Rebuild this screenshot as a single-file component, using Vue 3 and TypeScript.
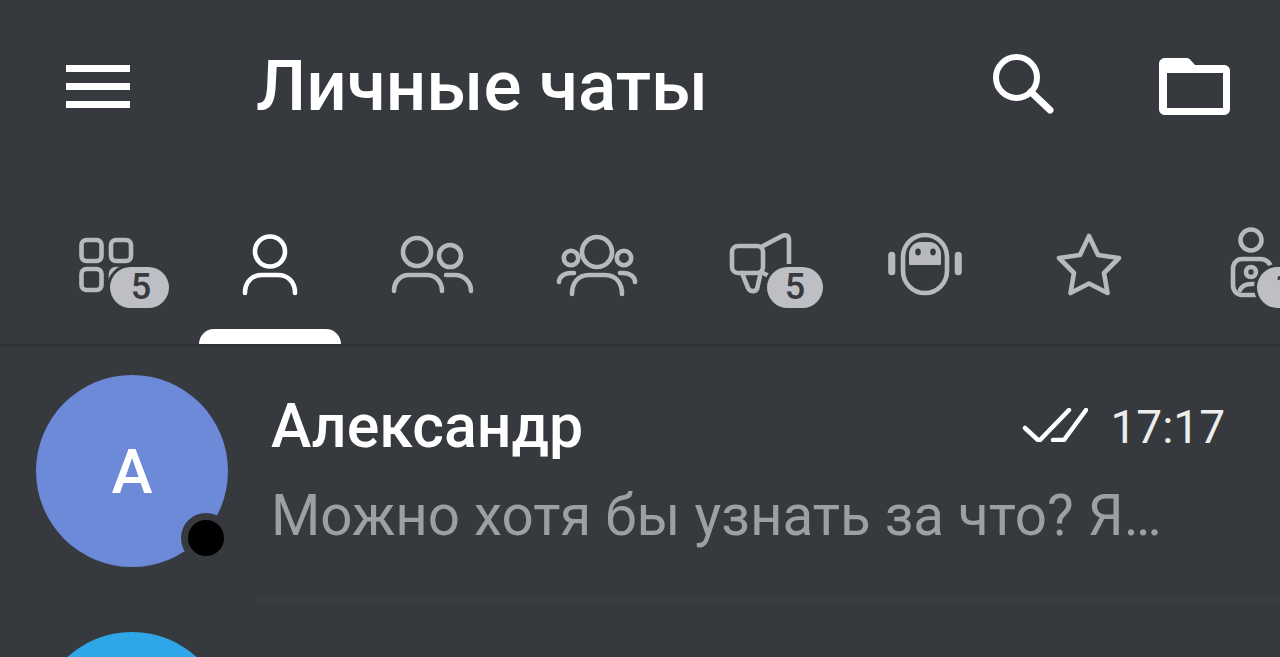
<template>
  <div class="screen">
    <!-- Top bar -->
    <header class="top-bar">
      <div class="menu-icon"><span></span><span></span><span></span></div>
      <h1 class="title">Личные чаты</h1>
      <svg class="search-icon" viewBox="0 0 64 64" fill="none" stroke="#fff">
        <circle cx="24.5" cy="24.5" r="20.5" stroke-width="6" />
        <path d="M39 39l19 18" stroke-width="7" stroke-linecap="round" />
      </svg>
      <svg class="folder-icon" viewBox="0 0 71 57">
        <path
          fill="#fff"
          fill-rule="evenodd"
          d="M6 0h21c2 0 3 .6 4.500 2L36 7h29c3.500 0 6 2.500 6 6v38c0 3.500-2.500 6-6 6H6c-3.500 0-6-2.500-6-6V6c0-3.500 2.500-6 6-6zM8 15v35h56V15z"
        />
      </svg>
    </header>

    <!-- Folder tabs -->
    <nav class="tabs">
      <div v-for="tab in tabs" :key="tab.id" class="tab" :class="{ active: tab.id === 'personal' }">
        <div class="tab-icon">
          <svg viewBox="0 0 80 80" fill="none" stroke="currentColor" stroke-width="4.600" stroke-linecap="round" stroke-linejoin="round">
            <g v-if="tab.id === 'all'">
              <rect x="15.500" y="14" width="20" height="21" rx="5" />
              <rect x="45" y="14" width="20" height="21" rx="5" />
              <rect x="15.500" y="43" width="20" height="21" rx="5" />
              <rect x="45" y="43" width="20" height="21" rx="5" />
            </g>
            <g v-else-if="tab.id === 'personal'">
              <circle cx="40" cy="25.500" r="15" />
              <path d="M15 67c0-11 7-18 17-18h16c10 0 17 7 17 18" />
            </g>
            <g v-else-if="tab.id === 'groups'">
              <circle cx="24" cy="26" r="14" />
              <circle cx="57" cy="30" r="11" />
              <path d="M1 65c0-9 6-16 15-16h18c9 0 15 7 15 16" />
              <path d="M53 49h9c9 0 16 7 16 16" />
            </g>
            <g v-else-if="tab.id === 'communities'">
              <circle cx="40" cy="26" r="15" />
              <circle cx="14" cy="32" r="7.200" />
              <circle cx="67" cy="32" r="7.200" />
              <path d="M15 68c0-11 6-19 17-19h16c11 0 17 8 17 19" />
              <path d="M2 56c0-5 5-9 12-9h3" />
              <path d="M78 56c0-5-5-9-12-9h-3" />
            </g>
            <g v-else-if="tab.id === 'channels'">
              <rect x="11" y="20" width="31" height="27" rx="6" />
              <path d="M42 20l19-10c4-2 7 0 7 4v32" />
              <path d="M42 47l8 4" />
              <path d="M21 47l6 15c2 4 7 4 9 1l3-13" />
            </g>
            <g v-else-if="tab.id === 'bots'">
              <rect x="18" y="9" width="44" height="58" rx="22" />
              <path d="M25 38V28c0-6 5-11 10-11h10c5 0 10 5 10 11v10z" fill="currentColor" stroke-width="2" />
              <rect x="5.500" y="28" width="2.500" height="19" rx="1.200" />
              <rect x="72" y="28" width="2.500" height="19" rx="1.200" />
              <ellipse cx="33" cy="26" rx="2.800" ry="3.400" fill="#36393e" stroke="none" />
              <ellipse cx="48" cy="26" rx="2.800" ry="3.400" fill="#36393e" stroke="none" />
            </g>
            <g v-else-if="tab.id === 'favorites'">
              <path d="M40 10l9 19 21 3-15 15 3.500 20L40 57.500 21.500 67 25 47 10 32l21-3z" />
            </g>
            <g v-else>
              <circle cx="39" cy="14" r="10.500" />
              <path d="M30 33h18c6 0 11 4 11 10v16c0 6-5 10-11 10H30c-5 0-9-4-9-10V43c0-6 4-10 9-10z" />
              <circle cx="39" cy="46" r="5" />
              <path d="M28 64c2-4 6-6 11-6h6" />
            </g>
          </svg>
          <span v-if="tab.badge" class="badge" :class="'badge-' + tab.id">{{ tab.badge }}</span>
        </div>
      </div>
    </nav>

    <!-- Chat list -->
    <section class="chat-list">
      <article class="chat">
        <div class="avatar">
          А
          <span class="status"></span>
        </div>
        <div class="chat-body">
          <div class="chat-head">
            <span class="chat-name">Александр</span>
            <svg class="read-icon" viewBox="0 0 66 34" fill="none" stroke="#fff" stroke-width="4.500" stroke-linecap="round" stroke-linejoin="round">
              <path d="M3 20l14 13L47 2" />
              <path d="M31 32h11L64 2" />
            </svg>
            <span class="chat-time">17:17</span>
          </div>
          <p class="chat-text">Можно хотя бы узнать за что? Я…</p>
        </div>
      </article>
      <div class="chat next">
        <div class="avatar blue"></div>
      </div>
    </section>
  </div>
</template>

<script setup lang="ts">
interface Tab {
  id: string
  badge?: number
}

const tabs: Tab[] = [
  { id: 'all', badge: 5 },
  { id: 'personal' },
  { id: 'groups' },
  { id: 'communities' },
  { id: 'channels', badge: 5 },
  { id: 'bots' },
  { id: 'favorites' },
  { id: 'agents', badge: 1 }
]
</script>

<style>
html,
body {
  margin: 0;
  background: #36393e;
}
</style>

<style scoped>
.screen {
  width: 1280px;
  height: 657px;
  overflow: hidden;
  background: #36393e;
  font-family: Roboto, "Noto Sans", sans-serif;
  color: #fff;
}

/* Top bar */
.top-bar {
  height: 172px;
  display: flex;
  align-items: center;
  padding: 0 50px 0 66px;
  box-sizing: border-box;
}

.menu-icon {
  width: 64px;
  margin-top: 1px;
  display: flex;
  flex-direction: column;
  gap: 10.500px;
}

.menu-icon span {
  height: 7.500px;
  background: #fff;
}

.title {
  flex: 1;
  margin: -2px 0 0 126px;
  font-size: 71px;
  font-weight: 500;
  line-height: 1;
}

.search-icon {
  width: 64px;
  height: 64px;
  margin-right: 103px;
  margin-top: -3px;
}

.folder-icon {
  width: 71px;
  height: 57px;
}

/* Tabs */
.tabs {
  height: 172px;
  display: flex;
  padding-left: 24px;
  box-sizing: border-box;
  overflow: hidden;
}

.tab {
  position: relative;
  flex: 0 0 163.800px;
  display: flex;
  justify-content: center;
  padding-top: 54px;
  box-sizing: border-box;
  color: #b7b9be;
}

.tab.active {
  color: #fff;
}

.tab.active::after {
  content: "";
  position: absolute;
  left: 11px;
  right: 11px;
  bottom: 0;
  height: 15px;
  background: #fff;
  border-radius: 16px 16px 0 0;
}

.tab-icon {
  position: relative;
  width: 80px;
  height: 80px;
}

.tab-icon svg {
  display: block;
  width: 80px;
  height: 80px;
  overflow: visible;
}

.badge {
  position: absolute;
  left: 44px;
  top: 41px;
  width: 59px;
  height: 41px;
  border-radius: 21px;
  background: #bdbfc4;
  box-shadow: 0 0 0 3px #36393e;
  color: #36393e;
  font-size: 36px;
  font-weight: 500;
  line-height: 41px;
  text-align: center;
}

.badge-all {
  text-indent: 3px;
}

.badge-channels {
  left: 46px;
  width: 56px;
}

.badge-agents {
  left: 45px;
  width: 55px;
}

/* Chat rows */
.chat-list {
  border-top: 3px solid #303338;
}

.chat {
  height: 254px;
  display: flex;
  padding: 28px 0 0 36px;
  box-sizing: border-box;
}

.chat.next {
  padding-top: 31px;
}

.avatar {
  position: relative;
  flex: none;
  width: 192px;
  height: 192px;
  border-radius: 50%;
  background: #6c8ad8;
  display: flex;
  align-items: center;
  justify-content: center;
  font-size: 62px;
  font-weight: 500;
}

.avatar.blue {
  background: #2ea6e8;
}

.status {
  position: absolute;
  left: 145px;
  top: 138px;
  width: 36px;
  height: 36px;
  border-radius: 50%;
  background: #000;
  border: 7px solid #36393e;
}

.chat-body {
  flex: 1;
  min-width: 0;
  height: 226px;
  box-sizing: border-box;
  margin-left: 28px;
  border-bottom: 2px solid #3b3e44;
}

.chat-head {
  display: flex;
  align-items: center;
  padding: 21px 55px 0 15px;
}

.chat-name {
  flex: 1;
  font-size: 60.800px;
  font-weight: 500;
  line-height: 62px;
}

.read-icon {
  width: 66px;
  height: 34px;
  margin: -4px 22px 0 0;
}

.chat-time {
  font-size: 46px;
  line-height: 62px;
  color: #eceded;
}

.chat-text {
  margin: 27px 0 0 15px;
  font-size: 56.500px;
  line-height: 62px;
  color: #9c9fa4;
  white-space: nowrap;
}
</style>
